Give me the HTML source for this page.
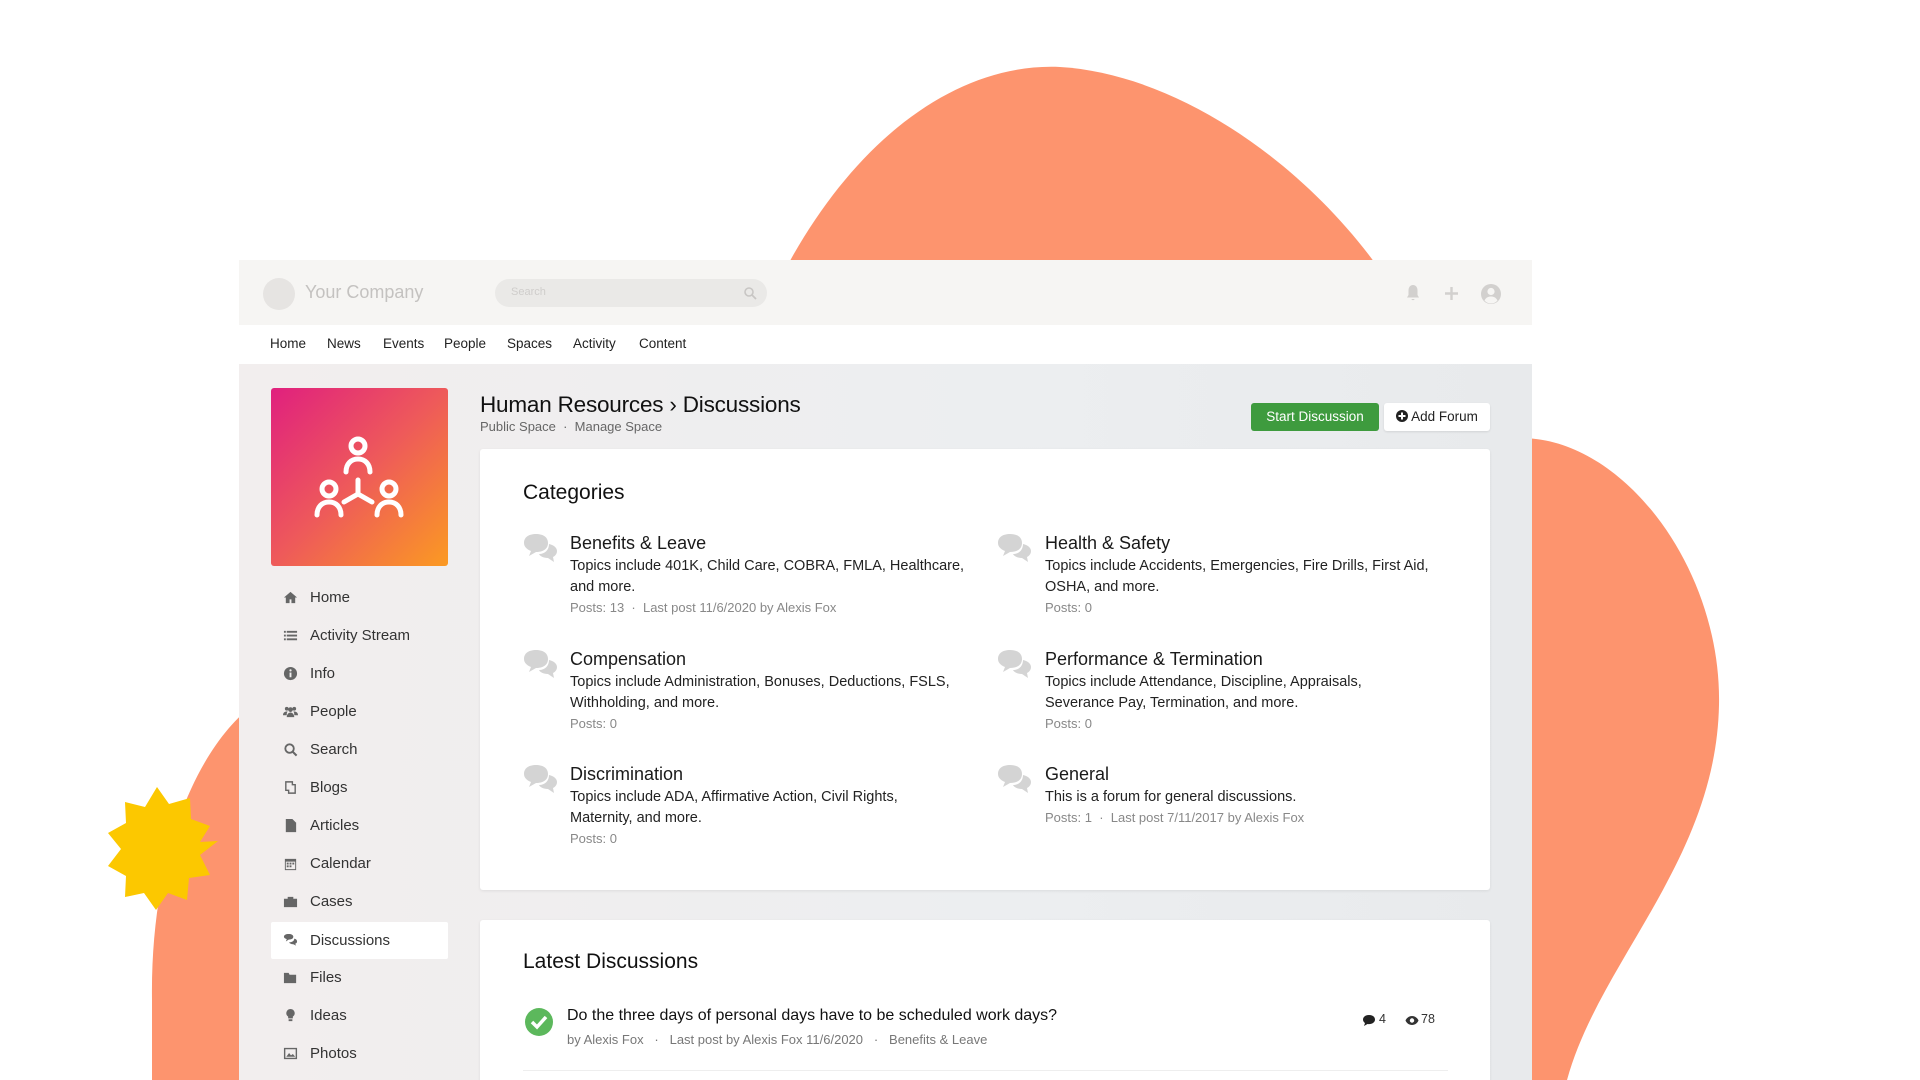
<!DOCTYPE html>
<html><head><meta charset="utf-8"><style>
*{box-sizing:border-box;margin:0;padding:0}
body{width:1920px;height:1080px;overflow:hidden;background:#fff;font-family:"Liberation Sans",sans-serif;position:relative;color:#222}
.a{position:absolute}
.frame{left:239px;top:260px;width:1293px;height:820px;background:linear-gradient(90deg,#f2eeee,#eceef0 60%,#e8eaec);overflow:hidden}
.hdr{left:0;top:0;width:1293px;height:65px;background:#f6f5f3}
.nav{left:0;top:65px;width:1293px;height:39px;background:#fff}
.nav span{position:absolute;top:11px;font-size:13.5px;color:#222}
.side{font-size:15px;color:#333}
.side div{position:absolute;left:32px;height:37px;width:177px;display:flex;align-items:center}
.side svg{width:15px;height:15px;margin:0 12px 0 12px;fill:#666}
.card{background:#fff;border-radius:3px;box-shadow:0 1px 3px rgba(0,0,0,.08)}
.cat .t{position:absolute;font-size:18px;color:#1a1a1a}
.cat .d{position:absolute;font-size:14.5px;line-height:21px;color:#222;width:405px}
.cat .m{position:absolute;font-size:13px;color:#888}
.bub{position:absolute;width:36px;height:30px}
</style></head><body>
<svg class="a" style="left:0;top:0" width="1920" height="1080">
<path d="M770 300 C 840 150 950 62 1060 67 C 1180 74 1320 170 1400 300 Z" fill="#fd946e"/>
<path d="M1500 440 C 1610 420 1722 560 1719 705 C 1716 860 1600 960 1567 1080 L1500 1080 Z" fill="#fd946e"/>
<path d="M260 700 C 200 740 150 850 152 1000 L152 1080 L260 1080 Z" fill="#fd946e"/>
<polygon fill="#fcc800" points="218,841 200,855 210,875 189,878 187,900 168,893 156,910 144,893 125,897 126,876 108,866 121,849 108,833 126,823 125,802 145,807 157,787 169,804 190,798 191,819 210,826 200,842"/>
</svg>
<div class="a frame">
 <div class="a hdr">
  <div class="a" style="left:24px;top:18px;width:32px;height:32px;border-radius:50%;background:#e6e4e2"></div>
  <div class="a" style="left:66px;top:22px;font-size:18px;color:#c4c2c0">Your Company</div>
  <div class="a" style="left:256px;top:19px;width:272px;height:28px;border-radius:14px;background:#eae9e7"><span style="position:absolute;left:16px;top:7px;font-size:11px;color:#cfcdcb">Search</span><svg style="position:absolute;right:10px;top:7px" width="14" height="14" viewBox="0 0 14 14"><circle cx="6" cy="6" r="4" stroke="#c8c6c4" stroke-width="1.6" fill="none"/><path d="M9 9l4 4" stroke="#c8c6c4" stroke-width="1.8"/></svg></div>
  <svg class="a" style="left:1166px;top:24px" width="16" height="18" viewBox="0 0 16 18"><path d="M8 1C5 1 3.5 3.5 3.5 6.5V11L2 13.5h12L12.5 11V6.5C12.5 3.5 11 1 8 1z M6.3 15a1.8 1.8 0 0 0 3.4 0z" fill="#d2d0ce"/></svg>
  <svg class="a" style="left:1206px;top:27px" width="13" height="13"><path d="M6.5 0v13M0 6.5h13" stroke="#d2d0ce" stroke-width="2.4"/></svg>
  <svg class="a" style="left:1241px;top:23px" width="22" height="22" viewBox="0 0 22 22"><circle cx="11" cy="11" r="10" fill="#d2d0ce"/><circle cx="11" cy="8.5" r="3.6" fill="#f6f5f3"/><path d="M4.5 17.5c1.5-3 3.8-4 6.5-4s5 1 6.5 4c-1.8 2-4 3-6.5 3s-4.7-1-6.5-3z" fill="#f6f5f3"/></svg>
 </div>
 <div class="a nav">
  <span style="left:31px">Home</span><span style="left:88px">News</span><span style="left:144px">Events</span><span style="left:205px">People</span><span style="left:268px">Spaces</span><span style="left:334px">Activity</span><span style="left:400px">Content</span>
 </div>
 <div class="a" style="left:32px;top:128px;width:177px;height:178px;border-radius:3px;background:linear-gradient(135deg,#e0207e,#ee5a5a 50%,#fb9a22)">
  <svg width="177" height="178" viewBox="0 0 177 178" fill="none" stroke="#fff" stroke-width="5" stroke-linecap="round"><circle cx="87" cy="58" r="7"/><path d="M75 84c0-8 5-13 12-13s12 5 12 13"/><circle cx="58" cy="101" r="7"/><path d="M46 127c0-8 5-13 12-13s12 5 12 13"/><circle cx="118" cy="101" r="7"/><path d="M106 127c0-8 5-13 12-13s12 5 12 13"/><path d="M87 92v14M87 106l-14 8M87 106l14 8"/></svg>
 </div>
 <div class="a side" style="left:0;top:0">
  <div style="top:319px"><svg viewBox="0 0 16 16"><path d="M8 2L1 8h2v6h4v-4h2v4h4V8h2z"/></svg>Home</div>
  <div style="top:357px"><svg viewBox="0 0 16 16"><path d="M1 3h2v2H1zM4 3h11v2H4zM1 7h2v2H1zM4 7h11v2H4zM1 11h2v2H1zM4 11h11v2H4z"/></svg>Activity Stream</div>
  <div style="top:395px"><svg viewBox="0 0 16 16"><circle cx="8" cy="8" r="7"/><rect x="7" y="7" width="2" height="5" fill="#f0eeee"/><circle cx="8" cy="4.7" r="1.2" fill="#f0eeee"/></svg>Info</div>
  <div style="top:433px"><svg viewBox="0 0 16 16"><circle cx="4" cy="5" r="2"/><circle cx="12" cy="5" r="2"/><circle cx="8" cy="6" r="2.5"/><path d="M0 12c0-3 2-4 4-4h1c-1 1-1 2-1 4zM16 12c0-3-2-4-4-4h-1c1 1 1 2 1 4zM4 14c0-3 2-5 4-5s4 2 4 5z"/></svg>People</div>
  <div style="top:471px"><svg viewBox="0 0 16 16"><circle cx="7" cy="7" r="4.5" stroke="#666" stroke-width="2" fill="none"/><path d="M10.5 10.5l4 4" stroke="#666" stroke-width="2.2"/></svg>Search</div>
  <div style="top:509px"><svg viewBox="0 0 16 16"><path d="M3 2h7v3h3v9H6v-3H3z" fill="none" stroke="#666" stroke-width="1.5"/></svg>Blogs</div>
  <div style="top:547px"><svg viewBox="0 0 16 16"><path d="M3 1h7l4 4v10H3z"/></svg>Articles</div>
  <div style="top:585px"><svg viewBox="0 0 16 16"><path d="M2 3h12v12H2z M3 6v8h10V6z"/><path d="M4 7h2v2H4zM7 7h2v2H7zM10 7h2v2h-2zM4 10h2v2H4zM7 10h2v2H7z"/></svg>Calendar</div>
  <div style="top:623px"><svg viewBox="0 0 16 16"><path d="M1 5h14v9H1zM5 3h6v2H5z"/></svg>Cases</div>
  <div style="top:662px;background:#fff;border-radius:2px"><svg viewBox="0 0 16 16"><path d="M1 4c0-2 2-3 5-3s5 1 5 3-2 3-5 3l-3 2 1-2.5C2 6 1 5 1 4z"/><path d="M12 6c2 .3 3 1.5 3 3 0 1-.7 2-2 2.5l1 2-3-1.5c-2.5 0-4-1-4.5-2 3 0 5.5-1.5 5.5-4z"/></svg>Discussions</div>
  <div style="top:699px"><svg viewBox="0 0 16 16"><path d="M1 3h5l1 2h7v9H1z"/></svg>Files</div>
  <div style="top:737px"><svg viewBox="0 0 16 16"><path d="M8 1a4.5 4.5 0 0 0-2.5 8.2V11h5V9.2A4.5 4.5 0 0 0 8 1zM6 12h4v2H6z"/></svg>Ideas</div>
  <div style="top:775px"><svg viewBox="0 0 16 16"><path d="M1 2h14v12H1z M2.5 3.5v9h11v-9z M3.5 11.5l3-4 2 2.5 2-1.5 2.5 3z"/></svg>Photos</div>
 </div>
 <div class="a" style="left:241px;top:132px;font-size:22.5px;color:#111;letter-spacing:-0.2px">Human Resources › Discussions</div>
 <div class="a" style="left:241px;top:159px;font-size:13px;color:#666">Public Space &nbsp;·&nbsp; Manage Space</div>
 <div class="a" style="left:1012px;top:143px;width:128px;height:28px;border-radius:3px;background:#3e9b3e;color:#fff;font-size:13.5px;text-align:center;line-height:28px">Start Discussion</div>
 <div class="a" style="left:1145px;top:143px;width:106px;height:28px;border-radius:3px;background:#fff;color:#222;font-size:13.5px;text-align:center;line-height:28px;box-shadow:0 1px 2px rgba(0,0,0,.1)"><svg width="12" height="12" viewBox="0 0 12 12" style="vertical-align:-1px"><circle cx="6" cy="6" r="6" fill="#222"/><path d="M6 2.5v7M2.5 6h7" stroke="#fff" stroke-width="2"/></svg> Add Forum</div>
 <div class="a card cat" style="left:241px;top:189px;width:1010px;height:441px">
  <div class="a" style="left:43px;top:32px;font-size:21px;color:#111">Categories</div>
  <svg class="bub" style="left:42px;top:84px" viewBox="0 0 36 30"><path d="M2 10c0-6 5-9 12-9s12 3 12 9-5 9-12 9l-7 4 2-5C4 16 2 13 2 10z" fill="#d4d4d4"/><path d="M27 11c5 1 8 4 8 7 0 3-2 5-4 6l1 5-6-4c-5 0-8-2-9-4 6 0 10-4 10-10z" fill="#d4d4d4"/></svg>
  <div class="t" style="left:90px;top:84px">Benefits &amp; Leave</div>
  <div class="d" style="left:90px;top:107px">Topics include 401K, Child Care, COBRA, FMLA, Healthcare, and more.</div>
  <div class="m" style="left:90px;top:151px">Posts: 13 &nbsp;·&nbsp; Last post 11/6/2020 by Alexis Fox</div>
  <svg class="bub" style="left:42px;top:200px" viewBox="0 0 36 30"><path d="M2 10c0-6 5-9 12-9s12 3 12 9-5 9-12 9l-7 4 2-5C4 16 2 13 2 10z" fill="#d4d4d4"/><path d="M27 11c5 1 8 4 8 7 0 3-2 5-4 6l1 5-6-4c-5 0-8-2-9-4 6 0 10-4 10-10z" fill="#d4d4d4"/></svg>
  <div class="t" style="left:90px;top:200px">Compensation</div>
  <div class="d" style="left:90px;top:223px">Topics include Administration, Bonuses, Deductions, FSLS, Withholding, and more.</div>
  <div class="m" style="left:90px;top:267px">Posts: 0</div>
  <svg class="bub" style="left:42px;top:315px" viewBox="0 0 36 30"><path d="M2 10c0-6 5-9 12-9s12 3 12 9-5 9-12 9l-7 4 2-5C4 16 2 13 2 10z" fill="#d4d4d4"/><path d="M27 11c5 1 8 4 8 7 0 3-2 5-4 6l1 5-6-4c-5 0-8-2-9-4 6 0 10-4 10-10z" fill="#d4d4d4"/></svg>
  <div class="t" style="left:90px;top:315px">Discrimination</div>
  <div class="d" style="left:90px;top:338px;width:370px">Topics include ADA, Affirmative Action, Civil Rights, Maternity, and more.</div>
  <div class="m" style="left:90px;top:382px">Posts: 0</div>
  <svg class="bub" style="left:516px;top:84px" viewBox="0 0 36 30"><path d="M2 10c0-6 5-9 12-9s12 3 12 9-5 9-12 9l-7 4 2-5C4 16 2 13 2 10z" fill="#d4d4d4"/><path d="M27 11c5 1 8 4 8 7 0 3-2 5-4 6l1 5-6-4c-5 0-8-2-9-4 6 0 10-4 10-10z" fill="#d4d4d4"/></svg>
  <div class="t" style="left:565px;top:84px">Health &amp; Safety</div>
  <div class="d" style="left:565px;top:107px;width:420px">Topics include Accidents, Emergencies, Fire Drills, First Aid, OSHA, and more.</div>
  <div class="m" style="left:565px;top:151px">Posts: 0</div>
  <svg class="bub" style="left:516px;top:200px" viewBox="0 0 36 30"><path d="M2 10c0-6 5-9 12-9s12 3 12 9-5 9-12 9l-7 4 2-5C4 16 2 13 2 10z" fill="#d4d4d4"/><path d="M27 11c5 1 8 4 8 7 0 3-2 5-4 6l1 5-6-4c-5 0-8-2-9-4 6 0 10-4 10-10z" fill="#d4d4d4"/></svg>
  <div class="t" style="left:565px;top:200px">Performance &amp; Termination</div>
  <div class="d" style="left:565px;top:223px;width:360px">Topics include Attendance, Discipline, Appraisals, Severance Pay, Termination, and more.</div>
  <div class="m" style="left:565px;top:267px">Posts: 0</div>
  <svg class="bub" style="left:516px;top:315px" viewBox="0 0 36 30"><path d="M2 10c0-6 5-9 12-9s12 3 12 9-5 9-12 9l-7 4 2-5C4 16 2 13 2 10z" fill="#d4d4d4"/><path d="M27 11c5 1 8 4 8 7 0 3-2 5-4 6l1 5-6-4c-5 0-8-2-9-4 6 0 10-4 10-10z" fill="#d4d4d4"/></svg>
  <div class="t" style="left:565px;top:315px">General</div>
  <div class="d" style="left:565px;top:338px">This is a forum for general discussions.</div>
  <div class="m" style="left:565px;top:361px">Posts: 1 &nbsp;·&nbsp; Last post 7/11/2017 by Alexis Fox</div>
 </div>
 <div class="a card" style="left:241px;top:660px;width:1010px;height:200px">
  <div class="a" style="left:43px;top:30px;font-size:21px;color:#111">Latest Discussions</div>
  <svg class="a" style="left:44px;top:87px" width="30" height="30" viewBox="0 0 30 30"><circle cx="15" cy="15" r="14" fill="#5cb85c"/><path d="M8 15l5 5 9-10" stroke="#fff" stroke-width="3.5" fill="none"/></svg>
  <div class="a" style="left:87px;top:87px;font-size:16px;color:#111">Do the three days of personal days have to be scheduled work days?</div>
  <div class="a" style="left:87px;top:112px;font-size:13px;color:#777">by Alexis Fox &nbsp; · &nbsp; Last post by Alexis Fox 11/6/2020 &nbsp; · &nbsp; Benefits &amp; Leave</div>
  <svg class="a" style="left:882px;top:94px" width="14" height="13" viewBox="0 0 14 13"><path d="M7 1C3.5 1 1 3 1 5.5c0 1.5.8 2.7 2 3.5L2 12l3.5-2c.5.1 1 .1 1.5.1 3.5 0 6-2 6-4.6S10.5 1 7 1z" fill="#222"/></svg>
  <div class="a" style="left:899px;top:92px;font-size:12.5px;color:#333">4</div>
  <svg class="a" style="left:925px;top:95px" width="14" height="11" viewBox="0 0 14 11"><path d="M7 1C4 1 1.5 3 .5 5.5 1.5 8 4 10 7 10s5.5-2 6.5-4.5C12.5 3 10 1 7 1z" fill="#333"/><circle cx="7" cy="5.5" r="2.2" fill="#fff"/></svg>
  <div class="a" style="left:941px;top:92px;font-size:12.5px;color:#333">78</div>
  <div class="a" style="left:43px;top:150px;width:925px;height:1px;background:#eee"></div>
 </div>
</div>
</body></html>
